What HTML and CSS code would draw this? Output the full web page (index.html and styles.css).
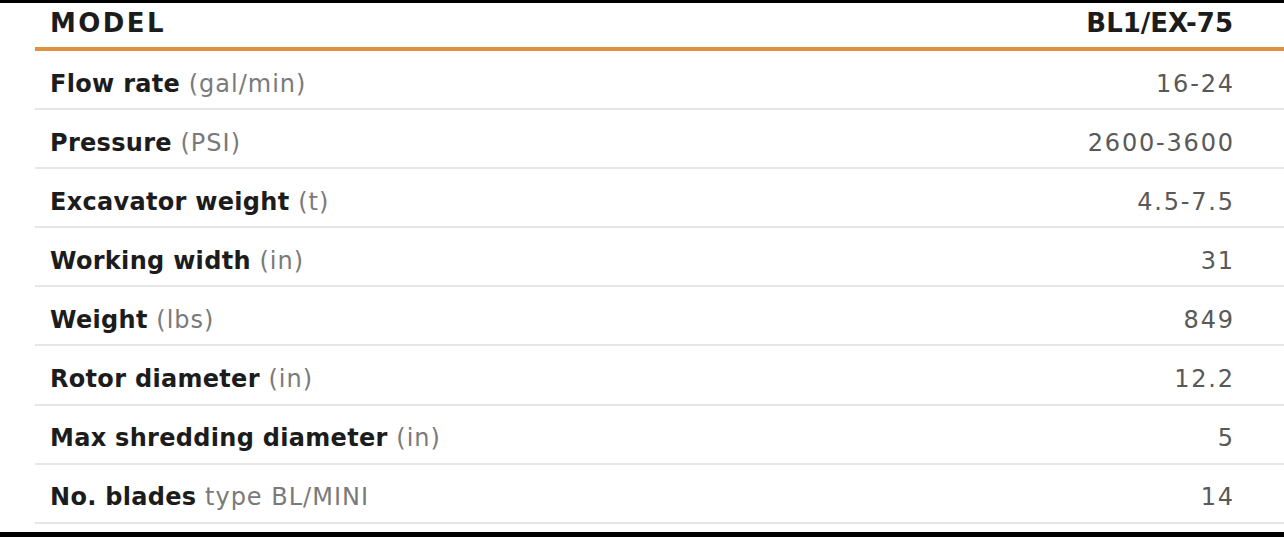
FILE: index.html
```html
<!DOCTYPE html>
<html>
<head>
<meta charset="utf-8">
<link rel="stylesheet" href="styles.css">
</head>
<body>
<div class="page">
  <div class="bar-top"></div>
  <div class="spec">
    <div class="spec-head">
      <span class="head-label">MODEL</span>
      <span class="head-value">BL1/EX-75</span>
    </div>
    <div class="spec-row"><span class="label"><b>Flow rate</b> (gal/min)</span><span class="value">16-24</span></div>
    <div class="spec-row"><span class="label"><b>Pressure</b> (PSI)</span><span class="value">2600-3600</span></div>
    <div class="spec-row"><span class="label"><b>Excavator weight</b> (t)</span><span class="value">4.5-7.5</span></div>
    <div class="spec-row"><span class="label"><b>Working width</b> (in)</span><span class="value">31</span></div>
    <div class="spec-row"><span class="label"><b>Weight</b> (lbs)</span><span class="value">849</span></div>
    <div class="spec-row"><span class="label"><b>Rotor diameter</b> (in)</span><span class="value">12.2</span></div>
    <div class="spec-row"><span class="label"><b>Max shredding diameter</b> (in)</span><span class="value">5</span></div>
    <div class="spec-row"><span class="label"><b>No. blades</b> type BL/MINI</span><span class="value">14</span></div>
  </div>
  <div class="fill"></div>
  <div class="bar-bottom"></div>
</div>
</body>
</html>
```

FILE: styles.css
```css
html, body {
  margin: 0;
  padding: 0;
  background: #ffffff;
}
.page {
  height: 537px;
  display: flex;
  flex-direction: column;
  font-family: "DejaVu Sans", "Liberation Sans", sans-serif;
}
.bar-top {
  height: 3px;
  background: #000;
}
.bar-bottom {
  height: 5px;
  background: #000;
}
.fill {
  flex: 1;
}
.spec {
  margin-left: 35px;
}
.spec-head {
  box-sizing: border-box;
  height: 48px;
  padding: 0 51px 4px 15px;
  border-bottom: 4px solid #e0913f;
  display: flex;
  justify-content: space-between;
  align-items: center;
  font-weight: 700;
  font-size: 26px;
  line-height: 1;
  color: #1c1c1c;
}
.head-label {
  letter-spacing: 2.4px;
}
.spec-row {
  box-sizing: border-box;
  height: 59.1px;
  padding: 8px 51px 0 15px;
  border-bottom: 2px solid #e6e6e6;
  display: flex;
  justify-content: space-between;
  align-items: center;
  font-size: 24px;
  line-height: 1;
}
.label {
  color: #7a7a7a;
  letter-spacing: 1px;
}
.label b {
  font-weight: 700;
  color: #1c1c1c;
  letter-spacing: 0.3px;
}
.value {
  color: #595959;
  letter-spacing: 1.8px;
  margin-right: -1.8px;
}
```
